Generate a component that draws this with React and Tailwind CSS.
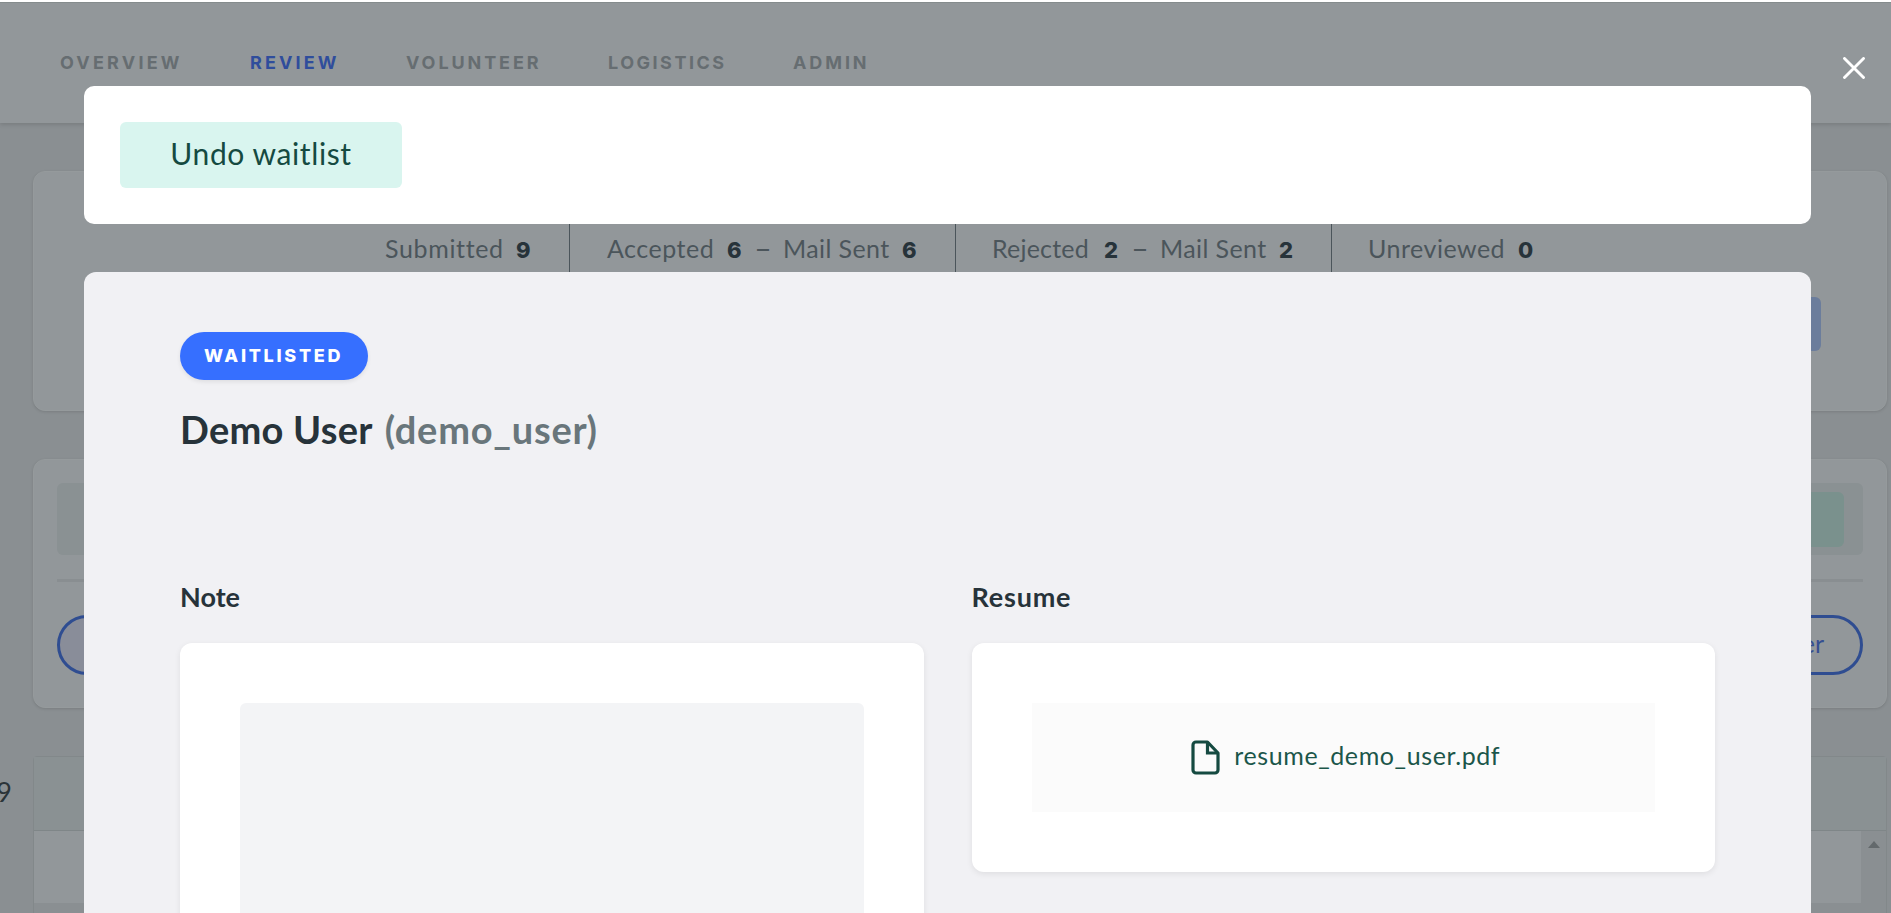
import React from "react";

const nav = [
  ["OVERVIEW", "w-[190px] tracking-[3.2px]"],
  ["REVIEW", "w-[156px] tracking-[3.1px] text-[#2f4d9c]"],
  ["VOLUNTEER", "w-[202px] tracking-[2.9px]"],
  ["LOGISTICS", "w-[185px] tracking-[2.5px]"],
  ["ADMIN", "w-[120px] tracking-[2.9px]"],
];

function Stat({ label, n, width }) {
  return (
    <span className="flex items-baseline gap-[14px]">
      <span className={width}>{label}</span>
      <b className="w-[14px] font-[Inter] text-[22px] font-extrabold text-[#27333a]">{n}</b>
    </span>
  );
}

function Dash() {
  return <span className="mx-[14px] flex w-[14px] justify-center pl-[2px] font-[Inter] text-[24px]">–</span>;
}

function Page() {
  return (
    <div className="flex h-[911px] w-full flex-col overflow-hidden bg-[#8a8f92]">
      <header className="h-[121px] shrink-0 border-t border-[#858c8d] bg-[#92979a] pt-[46px] pl-[60px] shadow-[0_2px_4px_rgba(0,0,0,0.12)]">
        <nav className="flex font-[Inter] text-[18px] leading-[28px] font-bold text-[#666d71]">
          {nav.map(([t, c]) => (
            <a key={t} className={`shrink-0 whitespace-nowrap ${c}`}>{t}</a>
          ))}
        </nav>
      </header>

      <section className="mt-12 ml-[33px] h-[240px] w-[1854px] shrink-0 rounded-[12px] border border-[#959a9c] bg-[#92979a] pt-[49px] shadow-[0_1px_3px_rgba(0,0,0,0.12)]">
        <div className="ml-[351px] flex h-[56px] items-center text-[25px] whitespace-nowrap text-[#4b555b]">
          <div className="flex h-full w-[185px] items-center border-r border-[#4b555b]">
            <Stat label="Submitted" n="9" width="w-[117px] tracking-[0.65px]" />
          </div>
          <div className="flex h-full w-[386px] items-center border-r border-[#4b555b] pl-[37px]">
            <Stat label="Accepted" n="6" width="w-[106px] tracking-[0.5px]" />
            <Dash />
            <Stat label="Mail Sent" n="6" width="w-[105px] tracking-[0.4px]" />
          </div>
          <div className="flex h-full w-[376px] items-center border-r border-[#4b555b] pl-[36px]">
            <Stat label="Rejected" n="2" width="w-[98px] tracking-[0.2px]" />
            <Dash />
            <Stat label="Mail Sent" n="2" width="w-[105px] tracking-[0.4px]" />
          </div>
          <div className="flex h-full items-center pl-[36px]">
            <Stat label="Unreviewed" n="0" width="w-[136px] tracking-[0.5px]" />
          </div>
        </div>
        <div className="mt-5 mr-[65px] ml-auto h-[54px] w-[120px] rounded-[6px] bg-[#6b7d9c]" />
      </section>

      <section className="mt-12 ml-[33px] flex h-[249px] w-[1854px] shrink-0 flex-col rounded-[12px] border border-[#959a9c] bg-[#92979a] px-[23px] pt-[23px] shadow-[0_1px_3px_rgba(0,0,0,0.12)]">
        <div className="flex h-[72px] items-center justify-end rounded-[6px] bg-[#8a9193] pr-[19px]">
          <div className="h-[55px] w-[140px] rounded-[6px] bg-[#7a918d]" />
        </div>
        <div className="mt-6 h-[3px] bg-[#898e91]" />
        <div className="mt-[33px] flex justify-between">
          <div className="h-[60px] w-[200px] rounded-full border-[3px] border-[#2f4d91] bg-[#898d99]" />
          <div className="flex h-[60px] w-[200px] items-center justify-end rounded-full border-[3px] border-[#2f4d91] pr-[36px] pb-[2px] text-[25px] text-[#364f91]">
            Filter
          </div>
        </div>
      </section>

      <section className="mt-12 flex shrink-0">
        <div className="w-[33px] shrink-0 pt-[16px]">
          <div className="flex w-[12px] justify-end text-[27px] text-[#2b3438]">9</div>
        </div>
        <div className="h-[170px] w-[1854px] rounded-t-[4px] border border-[#82888a] bg-[#8a8f92]">
          <div className="h-[74px] border-b border-[#7f8688] bg-[#8a9193]" />
          <div className="flex">
            <div className="h-[72px] w-[1827px] bg-[#92979a]" />
            <div className="flex flex-1 justify-center pt-[10px]">
              <svg width="12" height="7" viewBox="0 0 12 7" fill="#63696c"><path d="M0 7L6 0l6 7z" /></svg>
            </div>
          </div>
        </div>
      </section>
    </div>
  );
}

function Card({ title, tracking, children, className }) {
  return (
    <div className="flex flex-1 flex-col">
      <h2 className={`h-[72px] text-[27px] leading-[52px] font-bold text-[#27333a] ${tracking}`}>{title}</h2>
      <div className={`rounded-[12px] bg-white p-[60px] shadow-[0_2px_6px_rgba(0,0,0,0.08)] ${className}`}>{children}</div>
    </div>
  );
}

function Modal() {
  return (
    <div className="absolute inset-0 flex flex-col overflow-hidden pt-[86px] pl-[84px]">
      <div className="h-[138px] w-[1727px] shrink-0 rounded-[10px] bg-white p-9">
        <button className="h-[66px] w-[282px] rounded-[6px] bg-[#d9f5ef] pb-[3px] text-[30px] tracking-[0.6px] text-[#154a41]">Undo waitlist</button>
      </div>
      <div className="mt-12 h-[641px] w-[1727px] shrink-0 rounded-t-[12px] bg-[#f1f1f4] px-24 pt-[60px]">
        <div className="flex h-12 w-[188px] items-center rounded-full bg-[#366fff] pb-[1px] pl-6 font-[Inter] text-[18px] font-extrabold tracking-[2.7px] text-white shadow-[0_2px_4px_rgba(0,0,0,0.08)]">
          WAITLISTED
        </div>
        <h1 className="mt-[20px] flex h-[58px] items-center gap-[12px] text-[38px] font-bold whitespace-nowrap text-[#27333a]">
          <span className="tracking-[0.25px]">Demo User</span>
          <span className="tracking-[0.75px] text-[#69767b]">(demo_user)</span>
        </h1>
        <div className="mt-[113px] flex gap-12">
          <Card title="Note" tracking="" className="h-[500px]">
            <div className="h-[400px] rounded-[6px] bg-[#f3f4f6]" />
          </Card>
          <Card title="Resume" tracking="tracking-[0.8px]" className="h-[229px]">
            <a className="flex h-[109px] items-center justify-center gap-[14px] bg-[#fbfbfb] pb-[1px] pl-[5px] text-[25px] tracking-[0.6px] text-[#1b564a]">
              <svg width="29" height="35" viewBox="0 0 29 35" fill="none" stroke="#154a41" strokeWidth="3.200" strokeLinejoin="round">
                <path d="M5 2H16.500L27 13V30a3 3 0 0 1-3 3H5a3 3 0 0 1-3-3V5a3 3 0 0 1 3-3z" />
                <path d="M16.500 2V13H27" strokeLinejoin="miter" />
              </svg>
              <span className="pb-[2px]">resume_demo_user.pdf</span>
            </a>
          </Card>
        </div>
      </div>
      <button className="absolute top-[57px] left-[1843px]" aria-label="Close">
        <svg width="22" height="22" viewBox="0 0 22 22" stroke="white" strokeWidth="2.900" strokeLinecap="round"><path d="M1.500 1.500l19 19M20.500 1.500l-19 19" /></svg>
      </button>
    </div>
  );
}

export default function App() {
  return (
    <div className="relative h-[913px] w-[1891px] overflow-hidden bg-white pt-[2px] font-[Lato,sans-serif]">
      <Page />
      <Modal />
    </div>
  );
}
